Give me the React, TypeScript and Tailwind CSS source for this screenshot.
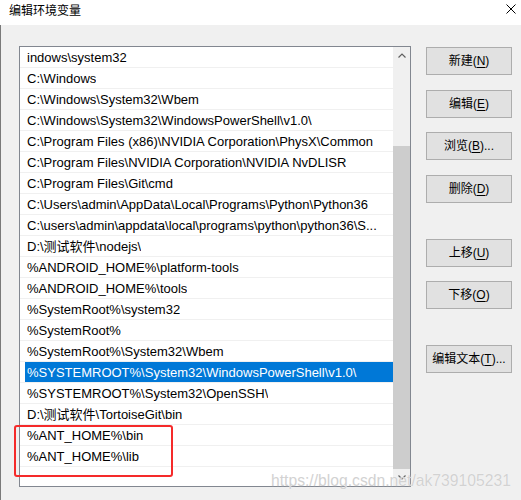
import React from "react";

const rows: string[] = [
  "indows\\system32",
  "C:\\Windows",
  "C:\\Windows\\System32\\Wbem",
  "C:\\Windows\\System32\\WindowsPowerShell\\v1.0\\",
  "C:\\Program Files (x86)\\NVIDIA Corporation\\PhysX\\Common",
  "C:\\Program Files\\NVIDIA Corporation\\NVIDIA NvDLISR",
  "C:\\Program Files\\Git\\cmd",
  "C:\\Users\\admin\\AppData\\Local\\Programs\\Python\\Python36",
  "C:\\users\\admin\\appdata\\local\\programs\\python\\python36\\S...",
  "D:\\测试软件\\nodejs\\",
  "%ANDROID_HOME%\\platform-tools",
  "%ANDROID_HOME%\\tools",
  "%SystemRoot%\\system32",
  "%SystemRoot%",
  "%SystemRoot%\\System32\\Wbem",
  "%SYSTEMROOT%\\System32\\WindowsPowerShell\\v1.0\\",
  "%SYSTEMROOT%\\System32\\OpenSSH\\",
  "D:\\测试软件\\TortoiseGit\\bin",
  "%ANT_HOME%\\bin",
  "%ANT_HOME%\\lib",
];

const SELECTED = 15;

function Btn({
  label,
  k,
  tail,
  className,
}: {
  label: string;
  k: string;
  tail?: string;
  className: string;
}) {
  return (
    <div
      className={
        "h-[28px] w-[86px] bg-[#e1e1e1] border border-[#adadad] flex items-center justify-center text-[12px] text-black leading-none " +
        className
      }
    >
      <span>
        {label}(<span className="underline underline-offset-2">{k}</span>){tail ?? ""}
      </span>
    </div>
  );
}

export default function App() {
  return (
    <div className="relative w-[521px] h-[500px] overflow-hidden bg-[#f0f0f0] font-['Liberation_Sans','Noto_Sans_CJK_SC',sans-serif] text-black">
      {/* Title bar */}
      <div className="h-[25px] bg-white flex items-start pl-[9px]">
        <div className="text-[12px] leading-[20px] font-['Noto_Sans_CJK_SC',sans-serif]">编辑环境变量</div>
      </div>
      <svg
        className="absolute left-[506px] top-[4px]"
        width="10"
        height="10"
        viewBox="0 0 10 10"
      >
        <path d="M0.5 0.5 L9.5 9.5 M9.5 0.5 L0.5 9.5" stroke="#000" strokeWidth="1" />
      </svg>

      {/* Body */}
      <div className="flex pl-[18px] pt-[21px] border-l border-[#7a7a7a] h-[475px]">
        {/* List box */}
        <div className="w-[392px] h-[441px] border border-[#828790] bg-white flex">
          <div className="flex-1 flex flex-col overflow-hidden">
            {rows.map((r, i) => (
              <div
                key={i}
                className="h-[21px] shrink-0 border-b border-[#f0f0f0] flex"
              >
                {i === SELECTED ? (
                  <div className="ml-[5px] flex-1 bg-[#0078d7] text-white pl-[2px] pt-[2px] text-[13px] leading-[18px] whitespace-nowrap overflow-hidden">
                    {r}
                  </div>
                ) : (
                  <div className="pl-[7px] pt-[2px] text-[13px] leading-[18px] whitespace-nowrap overflow-hidden">
                    {r}
                  </div>
                )}
              </div>
            ))}
          </div>
          {/* Scrollbar */}
          <div className="w-[17px] bg-[#f0f0f0] flex flex-col">
            <div className="h-[17px] flex items-center justify-center">
              <svg width="8" height="5" viewBox="0 0 8 5">
                <path d="M0.5 4.5 L4 1 L7.5 4.5" stroke="#606060" strokeWidth="1.2" fill="none" />
              </svg>
            </div>
            <div className="h-[82px]" />
            <div className="h-[323px] bg-[#cdcdcd]" />
            <div className="h-[17px] flex items-center justify-center">
              <svg width="8" height="5" viewBox="0 0 8 5">
                <path d="M0.5 0.5 L4 4 L7.5 0.5" stroke="#606060" strokeWidth="1.2" fill="none" />
              </svg>
            </div>
          </div>
        </div>

        {/* Buttons */}
        <div className="ml-[15px] flex flex-col">
          <Btn label="新建" k="N" className="mt-[1px]" />
          <Btn label="编辑" k="E" className="mt-[15px]" />
          <Btn label="浏览" k="B" tail="..." className="mt-[14px]" />
          <Btn label="删除" k="D" className="mt-[15px]" />
          <Btn label="上移" k="U" className="mt-[36px]" />
          <Btn label="下移" k="O" className="mt-[14px]" />
          <Btn label="编辑文本" k="T" tail="..." className="mt-[36px]" />
        </div>
      </div>

      {/* Red annotation box */}
      <div className="absolute left-[14px] top-[425px] w-[159px] h-[52px] border-2 border-[#f52a2a] rounded-[3px]" />

      {/* Watermark */}
      <div className="absolute left-[271px] top-[473px] text-[15.7px] leading-none font-['Liberation_Sans',sans-serif] text-[#d2d2d2] [text-shadow:0_0_1px_#ffffff] whitespace-nowrap">
        https://blog.csdn.net/ak739105231
      </div>
    </div>
  );
}
